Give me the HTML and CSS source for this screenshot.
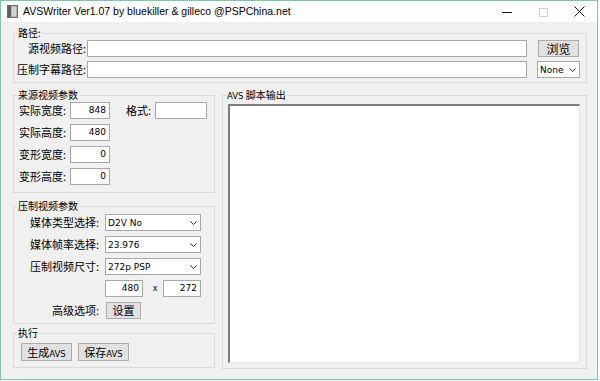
FILE: index.html
```html
<!DOCTYPE html>
<html lang="zh-CN">
<head>
<meta charset="utf-8">
<title>AVSWriter</title>
<link rel="stylesheet" href="styles.css">
</head>
<body>
<div class="window">
  <div class="titlebar">
    <svg class="app-icon" width="11" height="13" viewBox="0 0 11 13">
      <rect x="0.5" y="0.5" width="10" height="12" fill="#b4b4b4" stroke="#6b6b6b"/>
      <rect x="1" y="1" width="3" height="11" fill="#5e5e5e"/>
      <rect x="5" y="2" width="4" height="9" fill="#d2d2d2"/>
    </svg>
    <span class="title">AVSWriter Ver1.07 by bluekiller &amp; gilleco @PSPChina.net</span>
    <div class="controls">
      <span class="ctl"><svg width="10" height="10" viewBox="0 0 10 10"><line x1="0" y1="5.5" x2="10" y2="5.5" stroke="#111" stroke-width="1"/></svg></span>
      <span class="ctl"><svg width="10" height="10" viewBox="0 0 10 10"><rect x="1.5" y="1.5" width="8" height="8" fill="none" stroke="#cfcfcf" stroke-width="1"/></svg></span>
      <span class="ctl"><svg width="11" height="11" viewBox="0 0 11 11"><path d="M0.5 0.5 L10.5 10.5 M10.5 0.5 L0.5 10.5" stroke="#111" stroke-width="1"/></svg></span>
    </div>
  </div>

  <div class="client">
    <fieldset class="group path-group">
      <legend class="legend">路径:</legend>
      <div class="path-body">
        <span class="lbl lbl-right">源视频路径:</span>
        <div class="edit"></div>
        <button class="btn btn-browse">浏览</button>
        <span class="lbl lbl-right">压制字幕路径:</span>
        <div class="edit"></div>
        <div class="combo combo-none"><span>None</span><svg class="chev" width="7" height="4" viewBox="0 0 7 4"><polyline points="0.5,0.5 3.5,3.5 6.5,0.5" fill="none" stroke="#333" stroke-width="1"/></svg></div>
      </div>
    </fieldset>

    <div class="main">
      <div class="left-col">
        <fieldset class="group src-group">
          <legend class="legend">来源视频参数</legend>
          <div class="src-body">
            <div class="src-row">
              <span class="lbl src-lbl">实际宽度:</span>
              <div class="edit num src-edit">848</div>
              <span class="lbl fmt-lbl">格式:</span>
              <div class="edit fmt-edit"></div>
            </div>
            <div class="src-row">
              <span class="lbl src-lbl">实际高度:</span>
              <div class="edit num src-edit">480</div>
            </div>
            <div class="src-row">
              <span class="lbl src-lbl">变形宽度:</span>
              <div class="edit num src-edit">0</div>
            </div>
            <div class="src-row">
              <span class="lbl src-lbl">变形高度:</span>
              <div class="edit num src-edit">0</div>
            </div>
          </div>
        </fieldset>

        <fieldset class="group enc-group">
          <legend class="legend">压制视频参数</legend>
          <div class="enc-body">
            <span class="lbl lbl-right">媒体类型选择:</span>
            <div class="combo"><span>D2V No</span><svg class="chev" width="7" height="4" viewBox="0 0 7 4"><polyline points="0.5,0.5 3.5,3.5 6.5,0.5" fill="none" stroke="#333" stroke-width="1"/></svg></div>
            <span class="lbl lbl-right">媒体帧率选择:</span>
            <div class="combo"><span>23.976</span><svg class="chev" width="7" height="4" viewBox="0 0 7 4"><polyline points="0.5,0.5 3.5,3.5 6.5,0.5" fill="none" stroke="#333" stroke-width="1"/></svg></div>
            <span class="lbl lbl-right">压制视频尺寸:</span>
            <div class="combo"><span>272p PSP</span><svg class="chev" width="7" height="4" viewBox="0 0 7 4"><polyline points="0.5,0.5 3.5,3.5 6.5,0.5" fill="none" stroke="#333" stroke-width="1"/></svg></div>
            <span></span>
            <div class="size-row">
              <div class="edit num size-edit">480</div>
              <span class="times">x</span>
              <div class="edit num size-edit">272</div>
            </div>
            <span class="lbl lbl-right">高级选项:</span>
            <div class="btn-cell"><button class="btn btn-set">设置</button></div>
          </div>
        </fieldset>

        <fieldset class="group exec-group">
          <legend class="legend">执行</legend>
          <div class="exec-body">
            <button class="btn btn-exec">生成<span class="latin">AVS</span></button>
            <button class="btn btn-exec">保存<span class="latin">AVS</span></button>
          </div>
        </fieldset>
      </div>

      <fieldset class="group out-group">
        <legend class="legend"><span class="latin">AVS</span> 脚本输出</legend>
        <div class="out-body">
          <div class="output"></div>
        </div>
      </fieldset>
    </div>
  </div>
</div>
</body>
</html>
```

FILE: styles.css
```css
html, body {
  margin: 0;
  padding: 0;
  background: #ffffff;
}

body {
  font-family: "Noto Sans CJK SC", "Noto Sans", sans-serif;
  font-size: 11px;
  color: #000;
}

.window {
  width: 598px;
  height: 380px;
  box-sizing: border-box;
  border: 1px solid #7cc6b0;
  background: #f0f0f0;
  display: flex;
  flex-direction: column;
}

/* title bar */
.titlebar {
  height: 21px;
  flex-shrink: 0;
  background: #ffffff;
  display: flex;
  align-items: center;
}

.app-icon {
  margin-left: 6px;
  flex-shrink: 0;
}

.title {
  margin-left: 5px;
  font-family: "Liberation Sans", "Noto Sans", sans-serif;
  font-size: 10.5px;
  line-height: 21px;
  color: #000;
  white-space: nowrap;
}

.controls {
  margin-left: auto;
  display: flex;
  height: 100%;
}

.ctl {
  width: 36px;
  display: flex;
  align-items: center;
  justify-content: center;
}

/* client */
.client {
  flex: 1;
  min-height: 0;
  padding: 6px 10px 10px 12px;
  display: flex;
  flex-direction: column;
}

.group {
  margin: 0;
  padding: 0;
  border: 1px solid #dadada;
  min-width: 0;
}

.legend {
  margin-left: 3px;
  padding: 0 1px;
  font-size: 10px;
  line-height: 10px;
  white-space: nowrap;
}

.latin {
  font-family: "DejaVu Sans", sans-serif;
  font-size: 8.5px;
}

.lbl {
  white-space: nowrap;
  line-height: 17px;
}

.lbl-right {
  text-align: right;
  padding-right: 1px;
}

.edit {
  box-sizing: border-box;
  height: 17px;
  background: #ffffff;
  border: 1px solid #a8a8a8;
}

.num {
  font-family: "DejaVu Sans", sans-serif;
  font-size: 9px;
  line-height: 15px;
  text-align: right;
  padding-right: 3px;
}

.combo {
  box-sizing: border-box;
  height: 17px;
  background: #ffffff;
  border: 1px solid #a8a8a8;
  display: flex;
  align-items: center;
  justify-content: space-between;
  padding: 0 3px 0 2px;
  font-family: "DejaVu Sans", sans-serif;
  font-size: 9px;
}

.chev {
  display: block;
}

.btn {
  box-sizing: border-box;
  height: 17px;
  margin: 0;
  padding: 0;
  background: #e1e1e1;
  border: 1px solid #adadad;
  font-family: "Noto Sans CJK SC", sans-serif;
  font-size: 11px;
  line-height: 15px;
  color: #000;
}

/* path group */
.path-body {
  display: grid;
  grid-template-columns: 73px 440px 53px;
  row-gap: 4px;
  padding: 2px 0 4px 0;
}

.btn-browse {
  width: 41px;
  justify-self: end;
  margin-right: 1px;
  font-size: 12px;
}

.combo-none {
  width: 43px;
  justify-self: end;
}

/* main */
.main {
  flex: 1;
  min-height: 0;
  margin-top: 7px;
  display: flex;
  gap: 7px;
}

.left-col {
  width: 202px;
  flex-shrink: 0;
  display: flex;
  flex-direction: column;
}

.src-body {
  display: flex;
  flex-direction: column;
  gap: 5px;
  padding: 2px 0 7px 5px;
}

.src-row {
  display: flex;
  align-items: center;
  height: 17px;
}

.src-lbl {
  width: 51px;
}

.src-edit {
  width: 40px;
}

.fmt-lbl {
  margin-left: 16px;
  width: 29px;
}

.fmt-edit {
  width: 52px;
}

.enc-group {
  margin-top: 8px;
}

.enc-body {
  display: grid;
  grid-template-columns: 86px 96px;
  column-gap: 5px;
  row-gap: 5px;
  padding: 3px 0 4px 0;
  grid-auto-rows: 17px;
}

.size-row {
  display: flex;
  align-items: center;
  justify-content: space-between;
}

.size-edit {
  width: 38px;
}

.times {
  font-family: "DejaVu Sans", sans-serif;
  font-size: 8px;
  margin-left: 4px;
}

.btn-cell {
  display: flex;
  align-items: center;
}

.btn-set {
  width: 35px;
  margin-left: 1px;
}

.exec-group {
  margin-top: 4px;
}

.exec-body {
  display: flex;
  gap: 6px;
  padding: 5px 7px 6px 7px;
}

.btn-exec {
  width: 51px;
  height: 18px;
  line-height: 16px;
}

/* output group */
.out-group {
  flex: 1;
  display: flex;
  flex-direction: column;
}

.out-body {
  flex: 1;
  display: flex;
  padding: 3px 6px 5px 5px;
}

.output {
  flex: 1;
  background: #ffffff;
  border-top: 2px solid #7d7d7d;
  border-left: 2px solid #7d7d7d;
  border-right: 1px solid #e6e6e6;
  border-bottom: 1px solid #e6e6e6;
}
```
